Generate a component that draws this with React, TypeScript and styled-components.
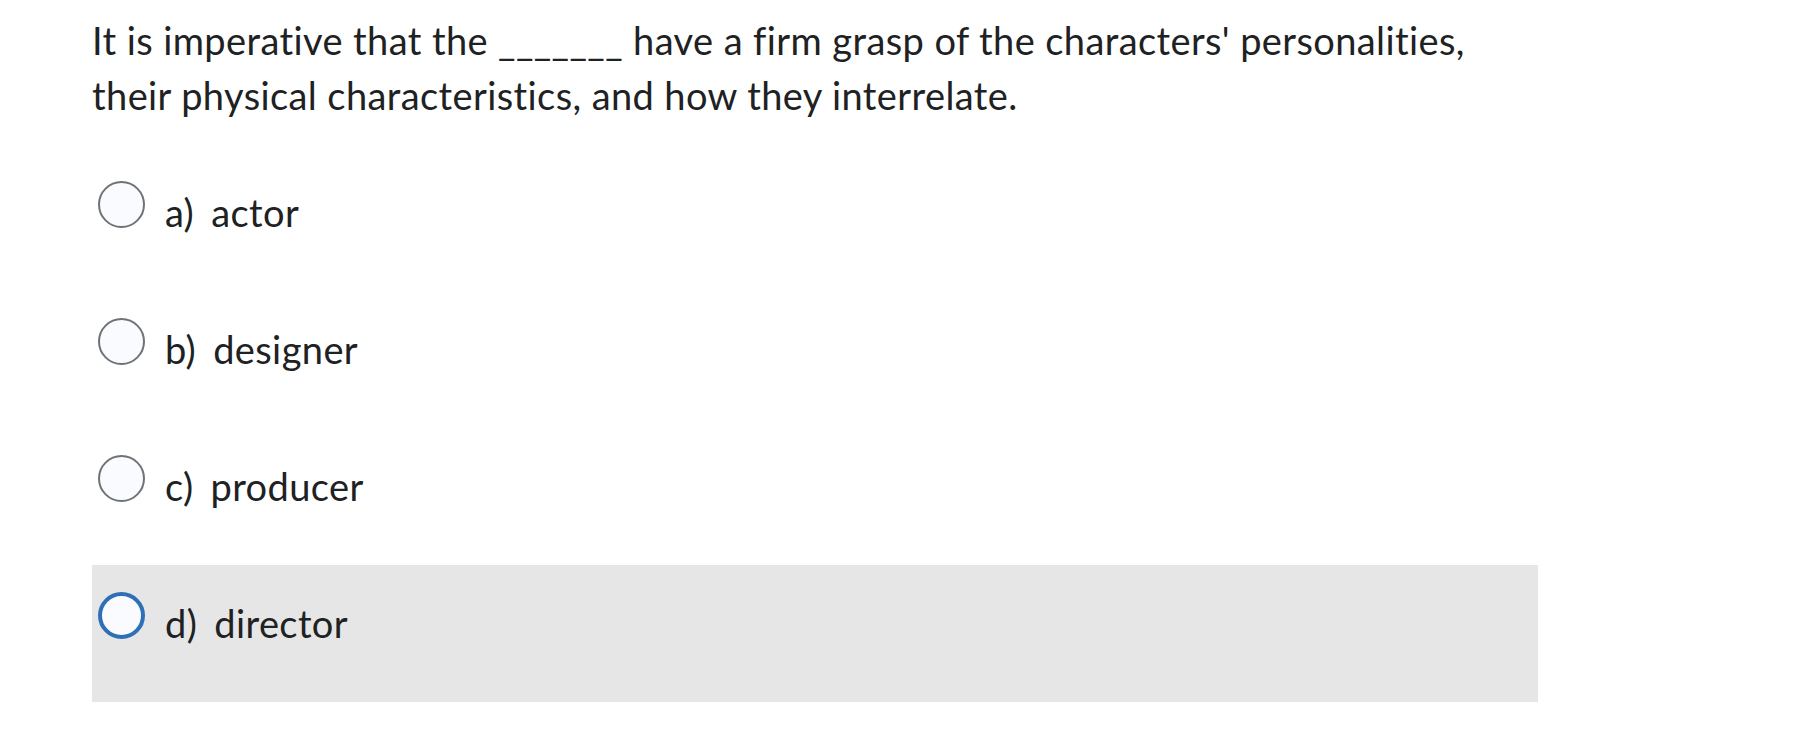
import React, { useState } from "react";
import styled, { createGlobalStyle } from "styled-components";

const GlobalStyle = createGlobalStyle`
	html, body {
		margin: 0;
		padding: 0;
		background: #ffffff;
	}
	body {
		font-family: Lato, "Noto Sans", sans-serif;
		font-variant-ligatures: none;
		letter-spacing: 0.4px;
		color: #202122;
	}
`;

const Page = styled.div`
	padding: 13px 0 0 92px;
`;

const Question = styled.fieldset`
	width: 1446px;
	margin: 0;
	padding: 0;
	border: 0;
`;

const Prompt = styled.legend`
	padding: 0;
	margin: 0 0 31px;
	font-size: 38px;
	line-height: 55px;
`;

const Options = styled.div`
	display: flex;
	flex-direction: column;
`;

const Option = styled.label<{ $focused?: boolean }>`
	display: flex;
	align-items: flex-start;
	height: 137px;
	box-sizing: border-box;
	padding: 27px 0 0 6px;
	background: ${(p) => (p.$focused ? "#e6e6e6" : "transparent")};
	cursor: pointer;
`;

const Radio = styled.span<{ $focused?: boolean }>`
	flex: none;
	width: 47px;
	height: 47px;
	box-sizing: border-box;
	border-radius: 50%;
	background: #f9fbff;
	border: ${(p) => (p.$focused ? "4px solid #2f6fb7" : "2px solid #6e7376")};
`;

const Label = styled.span`
	margin: 4px 0 0 20px;
	font-size: 38px;
	line-height: 55px;
`;

const Letter = styled.span`
	margin-right: 17px;
`;

const choices = [
	{ letter: "a)", text: "actor" },
	{ letter: "b)", text: "designer" },
	{ letter: "c)", text: "producer" },
	{ letter: "d)", text: "director" },
];

export default function App() {
	const [focused] = useState(3);

	return (
		<Page>
			<GlobalStyle />
			<Question>
				<Prompt>
					It is imperative that the _______ have a firm grasp of the
					characters' personalities, their physical characteristics, and how
					they interrelate.
				</Prompt>
				<Options>
					{choices.map((c, i) => (
						<Option key={c.letter} $focused={i === focused}>
							<Radio $focused={i === focused} />
							<Label>
								<Letter>{c.letter}</Letter>
								{c.text}
							</Label>
						</Option>
					))}
				</Options>
			</Question>
		</Page>
	);
}
